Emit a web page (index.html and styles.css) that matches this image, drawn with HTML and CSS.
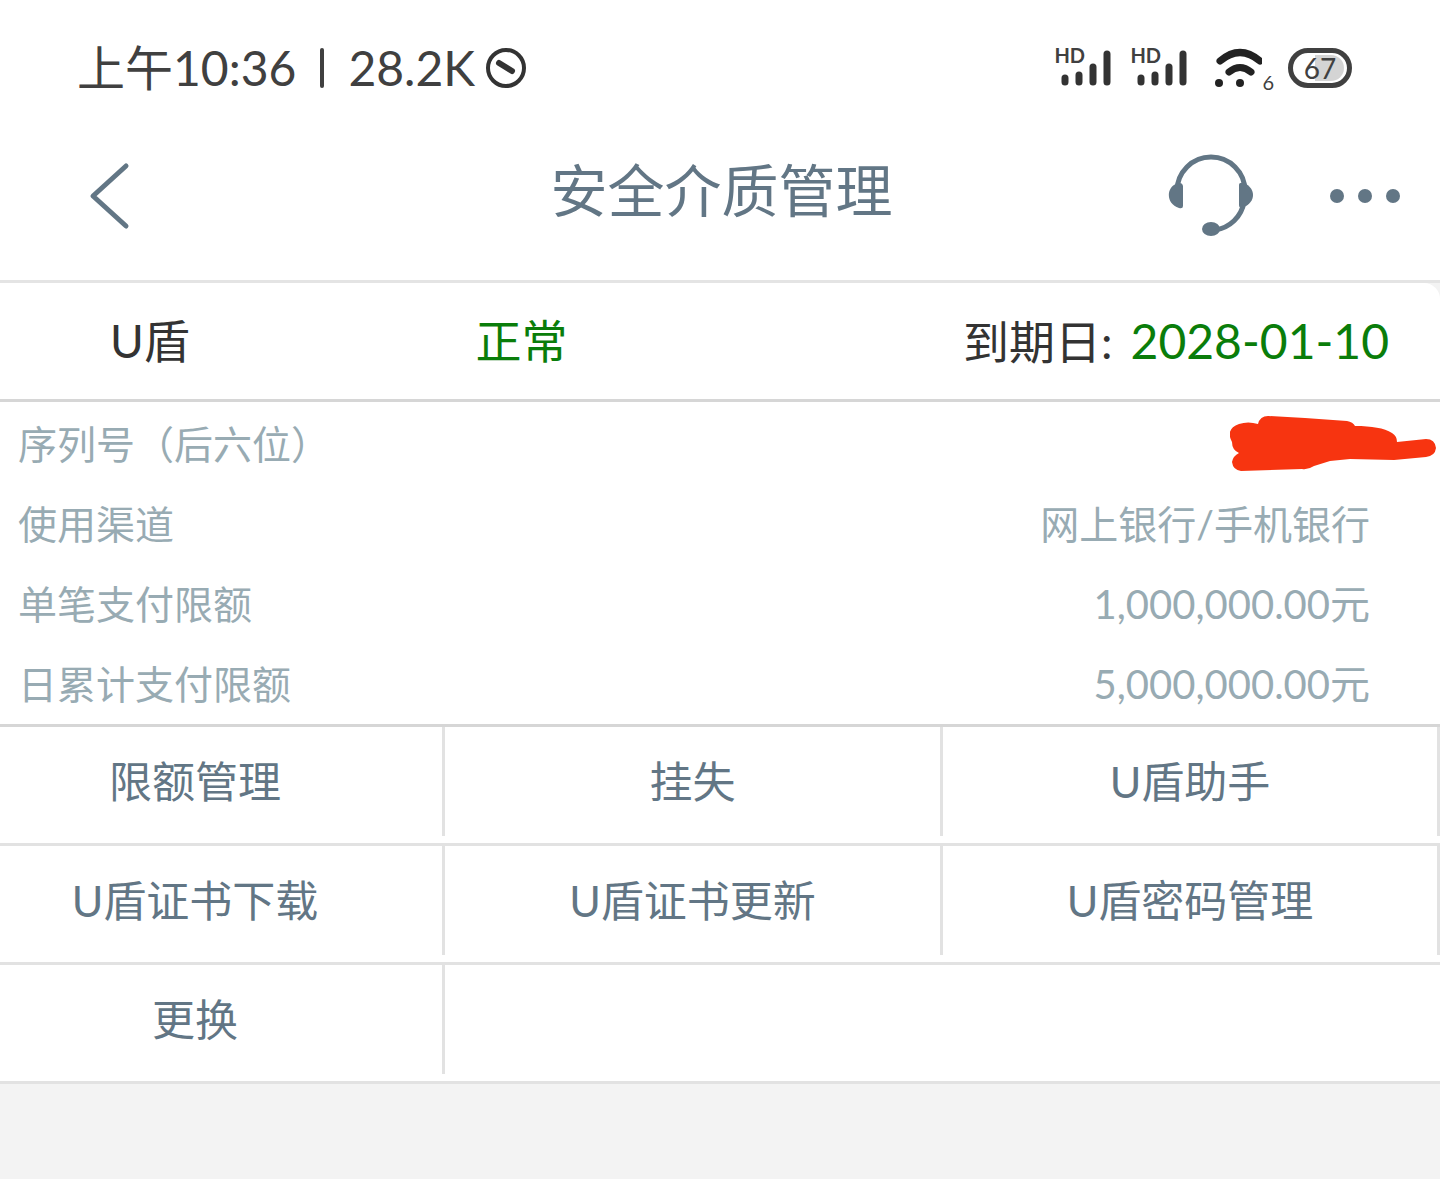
FILE: index.html
```html
<!DOCTYPE html>
<html lang="zh-CN">
<head>
  <meta charset="UTF-8">
  <meta name="viewport" content="width=device-width, initial-scale=1.0">
  <title>安全介质管理</title>
  <link rel="stylesheet" href="styles.css">
</head>
<body>

  <div class="status-bar">
    <div class="status-left">
      <span>上午10:36</span>
      <span class="divider"></span>
      <span>28.2K</span>
      <svg class="mute-icon" width="42" height="42" viewBox="0 0 42 42" fill="none" stroke="#333">
        <circle cx="21" cy="21" r="18" stroke-width="4"/>
        <path d="M14 16 27 24" stroke-width="6" stroke-linecap="round"/>
      </svg>
    </div>
    <div class="status-right">
      <div class="signal">
        <span class="hd">HD</span>
        <svg width="52" height="38" viewBox="0 0 52 38" stroke="#333" stroke-width="7" stroke-linecap="round">
          <path d="M5 29V33M19 26V33M33 18V33M47 5V33"/>
        </svg>
      </div>
      <div class="signal">
        <span class="hd">HD</span>
        <svg width="52" height="38" viewBox="0 0 52 38" stroke="#333" stroke-width="7" stroke-linecap="round">
          <path d="M5 29V33M19 26V33M33 18V33M47 5V33"/>
        </svg>
      </div>
      <div class="wifi">
        <svg width="48" height="40" viewBox="0 0 48 40" fill="none" stroke="#222" stroke-width="7" stroke-linecap="round">
          <path d="M6 13Q26-4 46 13M15 24Q26 15 37 24"/>
          <circle cx="5" cy="35" r="4" fill="#222" stroke="none"/>
          <circle cx="26" cy="35" r="4" fill="#222" stroke="none"/>
        </svg>
        <span class="wifi-gen">6</span>
      </div>
      <div class="battery"><span class="level">67</span></div>
    </div>
  </div>

  <header class="title-bar">
    <button class="icon-btn back" type="button" aria-label="返回">
      <svg width="44" height="70" viewBox="0 0 44 70" fill="none" stroke="#627685" stroke-width="5" stroke-linecap="round" stroke-linejoin="round">
        <path d="M39 5 6 35 39 65"/>
      </svg>
    </button>
    <h1>安全介质管理</h1>
    <div class="title-actions">
      <button class="icon-btn" type="button" aria-label="客服">
        <svg width="86" height="84" viewBox="0 0 86 84" fill="#627685">
          <path d="M9 37A34 34 0 0 1 77 37M76 48A34 34 0 0 1 47 76" fill="none" stroke="#627685" stroke-width="5"/>
          <path d="M15 30V52Q15 55 11 54C-2 50-2 34 8 30Q14 27 15 32Z"/>
          <path d="M71 31Q71 28 76 29C88 34 88 48 76 53Q71 55 71 51Z"/>
          <ellipse cx="43" cy="75" rx="9" ry="7"/>
        </svg>
      </button>
      <button class="icon-btn" type="button" aria-label="更多">
        <svg width="70" height="14" viewBox="0 0 70 14" fill="#627685">
          <circle cx="7" cy="7" r="7"/>
          <circle cx="35" cy="7" r="7"/>
          <circle cx="63" cy="7" r="7"/>
        </svg>
      </button>
    </div>
  </header>

  <main class="card">
    <div class="summary">
      <span class="name">U盾</span>
      <span class="state">正常</span>
      <span class="expiry">到期日:<span class="date">2028-01-10</span></span>
    </div>

    <dl class="details">
      <div class="row">
        <dt>序列号（后六位）</dt>
        <dd>
          <svg class="scribble" width="206" height="58" viewBox="0 0 206 58" fill="#f73410">
            <path d="M9 9Q18 6 28 9Q30 1 38 1L75 3 117 6Q123 7 125 11C142 11 154 13 162 18Q167 21 167 27L196 24Q205 24 206 33Q205 41 196 42L164 45 120 44 100 46 84 51Q78 55 72 54L11 56Q3 55 2 47Q3 41 9 38Q2 35 2 27Q-5 14 9 9Z"/>
          </svg>
        </dd>
      </div>
      <div class="row"><dt>使用渠道</dt><dd>网上银行/手机银行</dd></div>
      <div class="row"><dt>单笔支付限额</dt><dd class="amount">1,000,000.00元</dd></div>
      <div class="row"><dt>日累计支付限额</dt><dd class="amount">5,000,000.00元</dd></div>
    </dl>

    <nav class="menu">
      <div class="menu-row">
        <button type="button">限额管理</button>
        <button type="button">挂失</button>
        <button type="button">U盾助手</button>
      </div>
      <div class="menu-row">
        <button type="button">U盾证书下载</button>
        <button type="button">U盾证书更新</button>
        <button type="button">U盾密码管理</button>
      </div>
      <div class="menu-row">
        <button type="button">更换</button>
      </div>
    </nav>
  </main>

</body>
</html>
```
FILE: styles.css
```css
* {
  box-sizing: border-box;
}
body {
  margin: 0;
  background: #f3f3f3;
  color: #333;
  font-family: Lato, "Noto Sans CJK SC", sans-serif;
}
button {
  margin: 0;
  padding: 0;
  border: 0;
  background: none;
  color: inherit;
  font: inherit;
  cursor: pointer;
}
svg {
  display: block;
}

/* phone status bar */
.status-bar {
  display: flex;
  justify-content: space-between;
  align-items: center;
  height: 136px;
  padding: 0 88px 0 77px;
  background: #fff;
  color: #404040;
}
.status-left {
  display: flex;
  align-items: center;
  font-size: 48px;
  line-height: 56px;
}
.divider {
  width: 4px;
  height: 40px;
  margin: 0 24px;
  border-radius: 2px;
  background: #404040;
}
.mute-icon {
  margin-left: 10px;
}
.status-right {
  display: flex;
  align-items: center;
}
.signal {
  position: relative;
  margin-right: 18px;
  padding-left: 6px;
}
.hd {
  position: absolute;
  top: -6px;
  left: 0;
  font-size: 20px;
  font-weight: bold;
  line-height: 24px;
}
.wifi {
  display: flex;
  align-items: flex-end;
  margin: 0 14px 0 8px;
}
.wifi-gen {
  font-size: 20px;
  line-height: 12px;
}
.battery {
  display: flex;
  align-items: center;
  justify-content: center;
  width: 64px;
  height: 40px;
  border: 5px solid #404040;
  border-radius: 20px;
}
.level {
  padding: 0 8px;
  border-radius: 14px;
  background: linear-gradient(to right, #fff 40%, #d4d4d4 40%);
  font-size: 28px;
  line-height: 26px;
}

/* page title */
.title-bar {
  display: grid;
  grid-template-columns: 1fr auto 1fr;
  align-items: center;
  height: 147px;
  padding: 0 40px 24px 87px;
  border-bottom: 3px solid #e4e4e4;
  background: #fff;
  color: #627685;
}
.title-bar h1 {
  margin: 0 0 12px;
  padding-right: 44px;
  font-size: 57px;
  font-weight: normal;
  line-height: 72px;
}
.back {
  justify-self: start;
}
.title-actions {
  display: flex;
  justify-content: flex-end;
  align-items: center;
  gap: 76px;
}

.card {
  border-top-right-radius: 16px;
  background: #fff;
}
.summary {
  display: grid;
  grid-template-columns: 2fr 1fr 4fr;
  align-items: center;
  height: 119px;
  padding: 0 51px 0 110px;
  border-bottom: 3px solid #d6d6d6;
  font-size: 46px;
  line-height: 56px;
}
.state,
.date {
  color: #0a7d0a;
}
.expiry {
  text-align: right;
  white-space: nowrap;
}
.date {
  margin-left: 18px;
  font-size: 48px;
}

.details {
  margin: 0;
  padding: 2px 0 0;
  border-bottom: 3px solid #d6d6d6;
  color: #98abb3;
  font-size: 39px;
}
.row {
  display: flex;
  justify-content: space-between;
  align-items: center;
  height: 80px;
  padding: 0 70px 4px 18px;
}
.row dd {
  margin: 0;
}
.row .amount {
  font-size: 40px;
}
.scribble {
  margin: 4px -66px 0 0;
}

.menu-row {
  display: grid;
  grid-template-columns: 445fr 498fr 497fr;
  height: 119px;
  padding-bottom: 7px;
  border-bottom: 3px solid #e2e2e2;
  color: #627685;
  font-size: 43px;
}
.menu-row button {
  padding-bottom: 6px;
  border-right: 3px solid #e2e2e2;
}
.menu-row button:first-child {
  padding-right: 52px;
}
```
